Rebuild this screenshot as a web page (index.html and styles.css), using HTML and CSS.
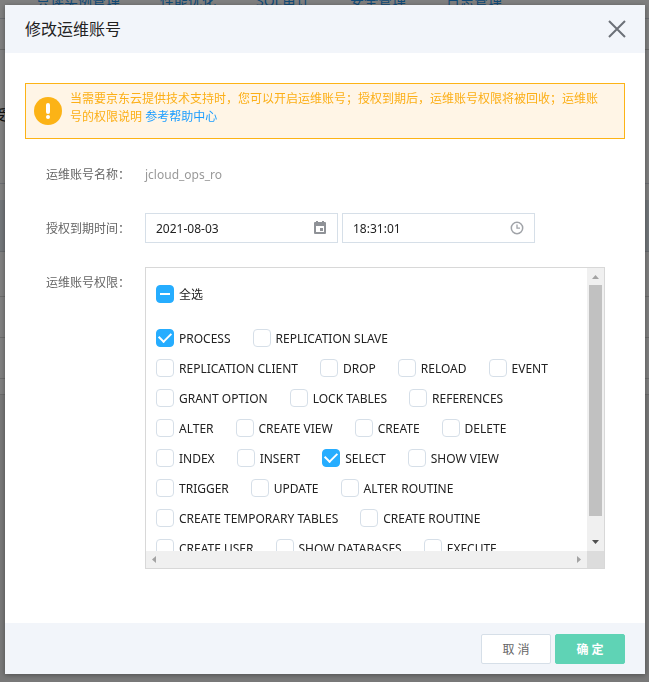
FILE: index.html
```html
<!DOCTYPE html>
<html lang="zh-CN">
<head>
<meta charset="utf-8">
<meta name="viewport" content="width=device-width, initial-scale=1">
<title>修改运维账号</title>
<link rel="stylesheet" href="styles.css">
</head>
<body>
<div class="page" aria-hidden="true">
  <nav class="tabs"><span>只读实例管理</span><span>性能优化</span><span>SQL审计</span><span>安全管理</span><span>日志管理</span></nav>
  <div class="toolbar"></div>
  <div class="summary">受</div>
  <div class="filters"></div>
  <div class="grid-head"></div>
  <div class="grid-row tall"></div>
  <div class="grid-row"></div>
  <div class="grid-row"></div>
  <div class="grid-gap"></div>
</div>
<div class="overlay">
  <form class="dialog" role="dialog" aria-labelledby="title">
    <header class="dialog-head">
      <h1 id="title">修改运维账号</h1>
      <button type="button" class="close" aria-label="关闭"><svg width="18" height="18" viewBox="0 0 18 18"><path d="M1 1l16 16M17 1L1 17" fill="none" stroke="#6c7077" stroke-width="2"/></svg></button>
    </header>
    <div class="dialog-body">
      <div class="alert">
        <svg class="alert-icon" width="28" height="28" viewBox="0 0 28 28"><circle cx="14" cy="14" r="14" fill="#fcb316"/><rect x="12" y="6" width="4" height="11" rx="2" fill="#fff"/><circle cx="14" cy="20" r="2" fill="#fff"/></svg>
        <p>当需要京东云提供技术支持时，您可以开启运维账号；授权到期后，运维账号权限将被回收；运维账号的权限说明 <a href="#help">参考帮助中心</a></p>
      </div>
      <div class="field">
        <span class="label">运维账号名称：</span>
        <span class="value">jcloud_ops_ro</span>
      </div>
      <div class="field">
        <label class="label" for="date">授权到期时间：</label>
        <div class="inputs">
          <div class="input-box"><input id="date" type="text" value="2021-08-03">
            <svg width="14" height="14" viewBox="0 0 14 14"><path d="M3 0h2v1h4V0h2v1h1q1 0 1 1v10q0 1-1 1H2q-1 0-1-1V2q0-1 1-1h1zM3 5v6h8V5zM7 7h3v3H7z" fill="#8f9297" fill-rule="evenodd"/></svg></div>
          <div class="input-box"><input id="time" type="text" value="18:31:01" aria-label="授权到期时刻">
            <svg width="14" height="14" viewBox="0 0 14 14"><circle cx="7" cy="7" r="5.7" fill="none" stroke="#a0a3a8" stroke-width="1.5"/><path d="M7 3.5V7.2h3" fill="none" stroke="#a0a3a8" stroke-width="1.3"/></svg></div>
        </div>
      </div>
      <div class="field">
        <span class="label" id="perm">运维账号权限：</span>
        <div class="scroller" role="group" aria-labelledby="perm">
          <div class="list">
            <div class="row all"><label><input type="checkbox" class="partial">全选</label></div>
            <div class="row"><label><input type="checkbox" checked>PROCESS</label><label><input type="checkbox">REPLICATION SLAVE</label></div>
            <div class="row"><label><input type="checkbox">REPLICATION CLIENT</label><label><input type="checkbox">DROP</label><label><input type="checkbox">RELOAD</label><label><input type="checkbox">EVENT</label></div>
            <div class="row"><label><input type="checkbox">GRANT OPTION</label><label><input type="checkbox">LOCK TABLES</label><label><input type="checkbox">REFERENCES</label></div>
            <div class="row"><label><input type="checkbox">ALTER</label><label><input type="checkbox">CREATE VIEW</label><label><input type="checkbox">CREATE</label><label><input type="checkbox">DELETE</label></div>
            <div class="row"><label><input type="checkbox">INDEX</label><label><input type="checkbox">INSERT</label><label><input type="checkbox" checked>SELECT</label><label><input type="checkbox">SHOW VIEW</label></div>
            <div class="row"><label><input type="checkbox">TRIGGER</label><label><input type="checkbox">UPDATE</label><label><input type="checkbox">ALTER ROUTINE</label></div>
            <div class="row"><label><input type="checkbox">CREATE TEMPORARY TABLES</label><label><input type="checkbox">CREATE ROUTINE</label></div>
            <div class="row"><label><input type="checkbox">CREATE USER</label><label><input type="checkbox">SHOW DATABASES</label><label><input type="checkbox">EXECUTE</label></div>
          </div>
          <div class="bar-v"><i class="arrow up"></i><i class="thumb"></i><i class="arrow down"></i></div>
          <div class="bar-h"><i class="arrow left"></i><i class="arrow right"></i></div>
          <div class="corner"></div>
        </div>
      </div>
    </div>
    <footer class="dialog-foot">
      <button type="button" class="btn">取 消</button>
      <button type="submit" class="btn primary">确 定</button>
    </footer>
  </form>
</div>
</body>
</html>
```

FILE: styles.css
```css
* { box-sizing: border-box; }
body {
  margin: 0;
  min-height: 100vh;
  overflow: hidden;
  background: #f0f0f0;
  color: #222;
  font: 12px/18px "Noto Sans", "Noto Sans CJK SC", sans-serif;
}
button, input { font: inherit; color: inherit; }

/* Page behind the dialog */
.page { height: 100vh; overflow: hidden; }
.tabs {
  display: flex;
  gap: 40px;
  height: 19px;
  padding-left: 36px;
  border-bottom: 1px solid #d2d7e0;
  background: #fff;
  color: #2294ee;
  font-size: 14px;
  line-height: 1px;
  white-space: nowrap;
}
.toolbar { height: 31px; border-bottom: 1px solid #d2d2d2; background: #fff; }
.summary { height: 134px; padding-top: 56px; border-bottom: 1px solid #d8dce6; background: #fff; text-indent: -7px; font-size: 14px; }
.filters { height: 16px; background: #fff; }
.grid-head { height: 52px; border-bottom: 1px solid #ccd3da; background: #e4ecf2; }
.grid-row { height: 41px; border-bottom: 1px solid #d8d8d8; background: #fff; }
.grid-row.tall { height: 45px; }
.grid-gap { height: 16px; border-bottom: 1px solid #d8d8d8; background: #fff; }

/* Dialog */
.overlay {
  position: fixed;
  inset: 0;
  padding: 5px 4px 8px 5px;
  background: rgba(0, 0, 0, .5);
}
.dialog {
  display: flex;
  flex-direction: column;
  height: 100%;
  background: #fff;
  box-shadow: 0 1px 5px rgba(0, 0, 0, .35);
}
.dialog-head {
  display: flex;
  align-items: center;
  justify-content: space-between;
  height: 48px;
  padding: 0 19px 0 20px;
  background: #f2f5fa;
}
.dialog-head h1 { margin: 0; font-size: 16px; font-weight: 400; }
.close { display: flex; padding: 0; border: 0; background: none; }
.dialog-body { flex: 1; padding: 30px 20px 0; }
.alert {
  display: flex;
  gap: 8px;
  align-items: center;
  height: 56px;
  padding: 0 20px 0 8px;
  border: 1px solid #fcb316;
  background: #fff5e6;
  color: #fcaf17;
}
.alert-icon { flex: none; }
.alert p { margin: 0 0 6px; }
.alert a { color: #1b9dff; text-decoration: none; }
.field { display: flex; margin-top: 24px; line-height: 30px; }
.alert + .field { margin-top: 20px; }
.label, .value { height: 30px; line-height: 32px; }
.label { flex: none; width: 99px; margin-left: 21px; color: #666; }
.value { color: #999; }
.inputs { display: flex; gap: 4px; }
.input-box {
  display: flex;
  align-items: center;
  width: 193px;
  height: 30px;
  padding: 0 10px;
  border: 1px solid #d6dfe8;
}
.input-box input { flex: 1; min-width: 0; height: 28px; padding: 2px 0 0; border: 0; outline: 0; background: none; }
.scroller {
  display: grid;
  flex: 1;
  grid-template: 283px 17px / 1fr 17px;
  margin-right: 20px;
  border: 1px solid #d8d8d8;
}
.list { overflow: hidden; padding: 11px 10px 0; white-space: nowrap; }
.row { display: flex; gap: 22px; height: 30px; line-height: 32px; }
.row.all { margin-bottom: 14px; }
.row label { display: flex; align-items: flex-start; gap: 5px; }
.row input {
  appearance: none;
  width: 18px;
  height: 18px;
  margin: 6px 0 0;
  border: 1px solid #d6dfe8;
  border-radius: 4px;
  background: #fff;
}
.row input:checked, .row input.partial {
  display: grid;
  place-items: center;
  border-color: #26adff;
  background: #26adff;
}
.row input:checked::before {
  content: "";
  width: 10px;
  height: 6px;
  margin: 0 0 4px;
  border: solid #fff;
  border-width: 0 0 2px 2px;
  transform: rotate(-45deg);
}
.row input.partial::before { content: ""; width: 10px; height: 2px; background: #fff; }
.bar-v, .bar-h { display: flex; align-items: center; justify-content: space-between; background: #f0f0f0; }
.bar-v { flex-direction: column; padding: 7px 0; }
.bar-h { padding: 0 6px; }
.thumb { width: 13px; height: 231px; margin: 6px 0 auto; background: #c1c1c1; }
.corner { background: #dcdcdc; }
.arrow { width: 7px; height: 4px; background: #a3a3a3; }
.up { clip-path: polygon(50% 0, 100% 100%, 0 100%); }
.down { background: #505050; clip-path: polygon(0 0, 100% 0, 50% 100%); }
.left, .right { width: 4px; height: 7px; }
.left { clip-path: polygon(100% 0, 100% 100%, 0 50%); }
.right { clip-path: polygon(0 0, 100% 50%, 0 100%); }
.dialog-foot {
  display: flex;
  gap: 4px;
  justify-content: flex-end;
  align-items: center;
  height: 51px;
  padding: 0 20px;
  background: #f2f5fa;
}
.btn {
  width: 70px;
  height: 30px;
  padding: 2px 0 0;
  border: 1px solid #d6dfe8;
  border-radius: 2px;
  background: #fff;
  color: #666;
}
.btn.primary { border-color: #5fd3b5; background: #5fd3b5; color: #fff; font-weight: 700; }
```
